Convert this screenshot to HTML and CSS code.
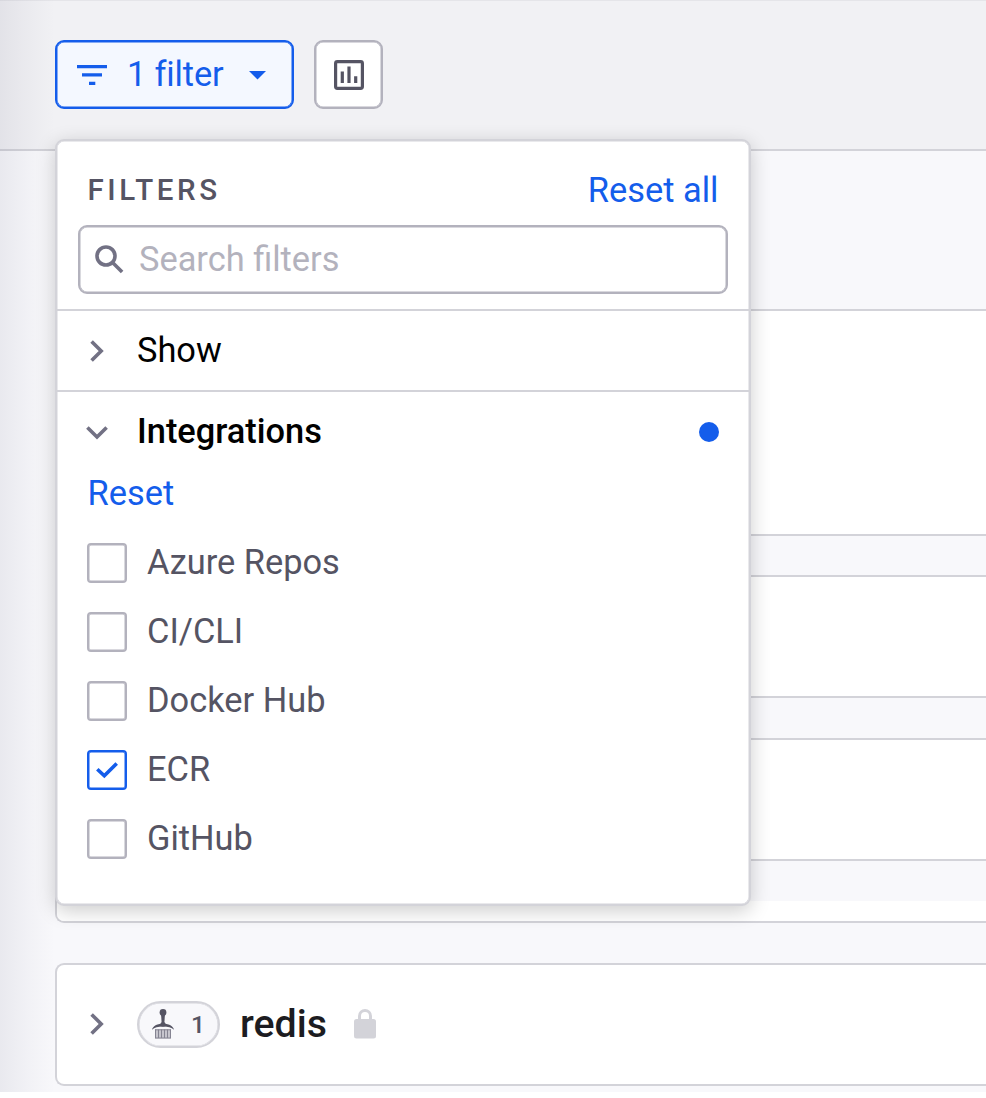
FILE: index.html
```html
<!DOCTYPE html>
<html lang="en">
<head>
<meta charset="utf-8">
<title>Projects</title>
<link rel="stylesheet" href="styles.css">
</head>
<body>
<div class="page">
  <header class="toolbar">
    <button class="btn btn-filter">
      <svg class="ic-filter" viewBox="0 0 30 21"><path d="M0 0h30v3.300H0zM5 8.300h20v3.300H5zM12 16.700h6.300V20H12z"/></svg>
      <span>1 filter</span>
      <svg class="ic-caret" viewBox="0 0 17 9"><path d="M0 0h17L8.500 8.600z"/></svg>
    </button>
    <button class="btn btn-chart">
      <svg class="ic-chart" viewBox="0 0 30 30"><rect x="1.600" y="1.600" width="26.800" height="26.800" rx="1.800"/><path d="M8.300 11.500V23M15 6.500V23M21.700 16.300V23"/></svg>
    </button>
    <div class="dropdown">
      <div class="dropdown-head">
        <div class="title-row"><span class="title">FILTERS</span><a class="link">Reset all</a></div>
        <div class="search">
          <svg class="ic-search" viewBox="0 0 29 29"><circle cx="11" cy="11" r="9"/><path d="M17.800 17.800l9.300 9.300"/></svg>
          <span>Search filters</span>
        </div>
      </div>
      <div class="group-row">
        <svg class="chevron" viewBox="0 0 22 22"><path d="M5.600 1.400l9.600 9.600-9.600 9.600"/></svg><span>Show</span>
      </div>
      <div class="group-row open">
        <svg class="chevron" viewBox="0 0 22 22"><path d="M1.400 6.400L11 16l9.600-9.600"/></svg><span>Integrations</span><i class="dot"></i>
      </div>
      <div class="reset-row"><a class="link">Reset</a></div>
      <ul class="options">
        <li><i class="box"></i><span>Azure Repos</span></li>
        <li><i class="box"></i><span>CI/CLI</span></li>
        <li><i class="box"></i><span>Docker Hub</span></li>
        <li><i class="box checked"><svg viewBox="0 0 22 16"><path d="M1.300 7.300l7 6.500L20.700 1.400"/></svg></i><span>ECR</span></li>
        <li><i class="box"></i><span>GitHub</span></li>
      </ul>
    </div>
  </header>
  <main class="content">
    <section class="card group-card">
      <div class="summary"></div>
      <div class="entry"></div>
      <div class="entry"></div>
      <div class="strip"></div>
    </section>
    <section class="card redis-card">
      <svg class="chevron" viewBox="0 0 22 22"><path d="M5.600 1.400l9.600 9.600-9.600 9.600"/></svg>
      <span class="pill">
        <svg class="ic-brush" viewBox="0 0 22 30">
          <circle cx="11" cy="3.400" r="3.400"/><path d="M9 5h4l-.6 8H9.600z"/><circle cx="11" cy="15.200" r="2.500"/>
          <path class="arc" d="M0 20.700c.8-3.200 4-5.900 11-5.900s10.200 2.700 11 5.900c-2.500-2.300-6-3.100-11-3.100s-8.500.8-11 3.100z"/>
          <path class="bristle-bg" d="M3 20.500h16V29.500H3z"/>
          <path class="bristle" d="M3.500 20.500V29M6.500 20.500V29M9.500 20.500V29M12.500 20.500V29M15.500 20.500V29M18.500 20.500V29M3 20.800h16M3 29h16"/>
        </svg>
        <b>1</b>
      </span>
      <span class="name">redis</span>
      <svg class="ic-lock" viewBox="0 0 22 30"><rect x="0" y="10" width="22" height="19.500" rx="2.500"/><path d="M5.500 11V7a5.500 5.500 0 0 1 11 0v4"/></svg>
    </section>
  </main>
  <div class="edge-shade"></div>
</div>
</body>
</html>
```
FILE: styles.css
```css
* { box-sizing: border-box; }
body { margin: 0; background: #fff; font-family: Roboto, sans-serif; font-size: 34.4px; overflow: hidden; }
svg { display: block; flex: none; overflow: visible; }
.page { position: relative; height: 1092px; width: 986px; background: #f8f8fb; overflow: hidden; }
.toolbar {
  position: relative; z-index: 2; height: 151px; padding: 39px 0 0 55px;
  display: flex; align-items: flex-start; gap: 20px;
  background: #f1f1f4; border-top: 1px solid #e5e5e9; border-bottom: 2px solid #d3d3d9;
}
.btn {
  height: 69px; margin: 0; padding: 0; font: inherit; background: #fff;
  border: 2px solid #b3b2bd; border-radius: 9px; display: flex; align-items: center;
  box-shadow: inset 0 0 0 .5px #b3b2bd;
}
.btn-filter { width: 239px; padding-left: 20px; color: #145deb; background: #f4f8ff; border-color: #145deb; box-shadow: inset 0 0 0 .5px #145deb; }
.ic-filter { width: 30px; height: 21px; margin: 1px 20px 0 0; fill: #145deb; }
.btn-filter span { width: 97px; padding-bottom: 2px; text-align: left; white-space: nowrap; letter-spacing: -.15px; }
.ic-caret { width: 17px; height: 9px; margin: 1px 0 0 25px; fill: #145deb; }
.btn-chart { width: 69px; justify-content: center; }
.ic-chart { width: 30px; height: 30px; fill: none; stroke: #555463; stroke-width: 3.2; }

.dropdown {
  position: absolute; left: 55px; top: 138px; width: 696px; height: 767px;
  background: #fff; border: 2px solid #d3d3d9; border-radius: 9px;
  box-shadow: 0 5px 20px rgba(0, 0, 0, .2), inset 0 0 0 .5px #d3d3d9;
}
.dropdown-head { height: 170px; padding: 20px 21px 0 20.500px; border-bottom: 2px solid #d3d3d9; }
.title-row { height: 64px; padding: 0 9.500px 7px 10px; display: flex; align-items: center; justify-content: space-between; }
.title { font-size: 29.500px; font-weight: 500; letter-spacing: 3.600px; color: #555463; }
.link { color: #145deb; }
.search {
  height: 69px; display: flex; align-items: center; padding-left: 15px; gap: 15.500px;
  border: 2px solid #b3b2bd; border-radius: 9px; color: #b3b2bd;
  box-shadow: inset 0 0 0 .5px #b3b2bd;
}
.search span { padding-bottom: 1px; }
.ic-search { width: 29px; height: 29px; fill: none; stroke: #727184; stroke-width: 3.6; }
.group-row { height: 81px; padding: 0 29px 0 29px; display: flex; align-items: center; gap: 29px; color: #000; border-bottom: 2px solid #d3d3d9; }
.group-row span { padding-bottom: 1px; }
.group-row.open { height: 80px; padding-right: 30.500px; font-weight: 500; border: 0; }
.group-row.open span { padding-bottom: 3px; }
.chevron { width: 22px; height: 22px; fill: none; stroke: #727184; stroke-width: 3.6; }
.dot { width: 20px; height: 20px; border-radius: 50%; background: #145deb; margin-left: auto; }
.reset-row { height: 56px; padding: 0 30.500px 15px; display: flex; align-items: center; }
.options { list-style: none; margin: 0; padding: 0 0 0 30px; }
.options li { height: 69px; display: flex; align-items: center; gap: 20px; color: #555463; }
.options span { padding-bottom: 1px; }
.box { width: 40px; height: 40px; border: 2px solid #b3b2bd; border-radius: 4px; display: flex; align-items: center; justify-content: center; box-shadow: inset 0 0 0 .5px #b3b2bd; }
.box.checked { border-color: #145deb; box-shadow: inset 0 0 0 .5px #145deb; }
.box svg { width: 22px; height: 16px; fill: none; stroke: #145deb; stroke-width: 3.6; }

.content { padding: 158px 0 0 55px; }
.card { background: #fff; border: 2px solid #d3d3d9; border-right: 0; border-radius: 9px 0 0 9px; }
.group-card { height: 614px; background: #f8f8fb; overflow: hidden; }
.summary { height: 225px; background: #fff; border-bottom: 2px solid #d3d3d9; }
.entry { height: 123px; margin-top: 39px; background: #fff; border: 2px solid #d3d3d9; border-right: 0; }
.entry + .entry { margin-top: 40px; }
.strip { height: 20px; margin-top: 40px; background: #fff; }
.redis-card { height: 123px; margin-top: 40px; padding: 0 0 1px 29px; display: flex; align-items: center; }
.pill {
  width: 83px; height: 47px; margin-left: 29px; padding: 0 13px; display: flex; align-items: center; justify-content: space-between;
  border: 2px solid #d3d3d9; border-radius: 24px; background: #f8f8fb; box-shadow: inset 0 0 0 .5px #d3d3d9;
}
.pill b { font-size: 24.600px; font-weight: 500; color: #555463; }
.ic-brush { width: 22px; height: 30px; fill: #555463; }
.ic-brush .bristle-bg { fill: #c6c5cd; }
.ic-brush .bristle { fill: none; stroke: #858492; stroke-width: 1; }
.name { margin-left: 20px; font-size: 39.300px; font-weight: 500; color: #1c1c21; }
.ic-lock { width: 22px; height: 30px; margin-left: 27px; fill: #d3d3d9; }
.ic-lock path { fill: none; stroke: #d3d3d9; stroke-width: 3; }
.edge-shade { position: absolute; z-index: 3; left: 0; top: 0; width: 55px; height: 100%; background: linear-gradient(90deg, rgba(57, 56, 92, .08), rgba(57, 56, 92, .035) 50%, rgba(57, 56, 92, 0)); pointer-events: none; }
```
